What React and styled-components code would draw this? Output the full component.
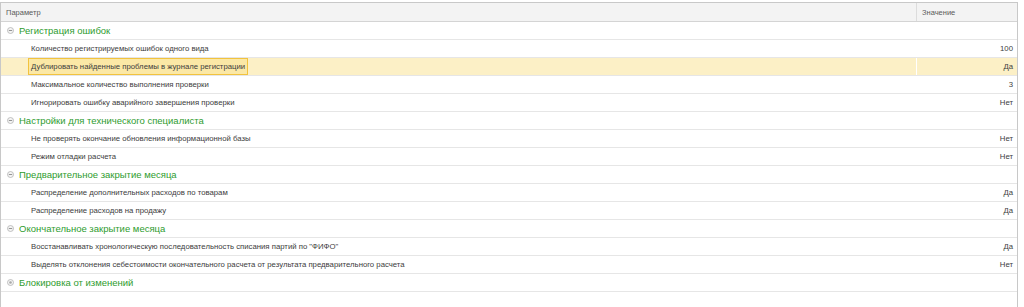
import React from "react";
import styled, { createGlobalStyle } from "styled-components";

const Global = createGlobalStyle`
  html, body { margin: 0; padding: 0; background: #fff; }
  body { font-family: Arial, "Liberation Sans", sans-serif; }
`;

const Page = styled.div`
  width: 1024px;
  height: 307px;
  background: #fff;
  padding-top: 2px;
  box-sizing: border-box;
`;

const Table = styled.div`
  width: 1018px;
  height: 305px;
  border-left: 1px solid #c8c8c8;
  border-right: 1px solid #c8c8c8;
  box-sizing: border-box;
  display: flex;
  flex-direction: column;
`;

const Header = styled.div`
  display: grid;
  grid-template-columns: 915px 1fr;
  height: 20px;
  border-top: 1px solid #c8c8c8;
  border-bottom: 1px solid #d4d4d4;
  background: #f3f3f3;
  box-sizing: border-box;
`;

const HeadCell = styled.div`
  display: flex;
  align-items: center;
  padding-left: ${(p) => p.$pad}px;
  font-size: 7.5px;
  color: #5a5a5a;
  border-left: ${(p) => (p.$divider ? "1px solid #dcdcdc" : "none")};
`;

const Row = styled.div`
  display: grid;
  grid-template-columns: 915px 1fr;
  height: 18px;
  box-sizing: border-box;
  border-bottom: 1px solid #e6e6e6;
  background: ${(p) => (p.$active ? "#fcf0c6" : "#fff")};
`;

const NameCell = styled.div`
  display: flex;
  align-items: center;
  padding-left: ${(p) => (p.$group ? 6 : 27)}px;
`;

const ItemText = styled.span`
  font-size: 7.75px;
  color: #3d3d3d;
  padding: 0 2px;
  height: 17px;
  display: flex;
  align-items: center;
  box-sizing: border-box;
  border: 1px solid ${(p) => (p.$active ? "#f2c33e" : "transparent")};
  background: ${(p) => (p.$active ? "#fbe8a6" : "transparent")};
`;

const GroupText = styled.span`
  font-size: 9.5px;
  color: #2e9c2e;
  margin-left: 5px;
`;

const ValueCell = styled.div`
  display: flex;
  align-items: center;
  justify-content: flex-end;
  padding-right: 4px;
  font-size: 7.75px;
  color: #3d3d3d;
  border-left: 1px solid ${(p) => (p.$active ? "#ffffff" : "transparent")};
`;

const Toggle = ({ open }) => (
  <svg width="7" height="7" viewBox="0 0 7 7">
    <circle cx="3.5" cy="3.5" r="3" fill="#f4f4f4" stroke="#b4b4b4" strokeWidth="0.8" />
    {open ? (
      <line x1="1.8" y1="3.5" x2="5.2" y2="3.5" stroke="#8a8a8a" strokeWidth="0.9" />
    ) : (
      <circle cx="3.5" cy="3.5" r="1.3" fill="#a8a8a8" />
    )}
  </svg>
);

const data = [
  {
    title: "Регистрация ошибок",
    open: true,
    items: [
      ["Количество регистрируемых ошибок одного вида", "100"],
      ["Дублировать найденные проблемы в журнале регистрации", "Да", true],
      ["Максимальное количество выполнения проверки", "3"],
      ["Игнорировать ошибку аварийного завершения проверки", "Нет"],
    ],
  },
  {
    title: "Настройки для технического специалиста",
    open: true,
    items: [
      ["Не проверять окончание обновления информационной базы", "Нет"],
      ["Режим отладки расчета", "Нет"],
    ],
  },
  {
    title: "Предварительное закрытие месяца",
    open: true,
    items: [
      ["Распределение дополнительных расходов по товарам", "Да"],
      ["Распределение расходов на продажу", "Да"],
    ],
  },
  {
    title: "Окончательное закрытие месяца",
    open: true,
    items: [
      ["Восстанавливать хронологическую последовательность списания партий по \"ФИФО\"", "Да"],
      ["Выделять отклонения себестоимости окончательного расчета от результата предварительного расчета", "Нет"],
    ],
  },
  { title: "Блокировка от изменений", open: false, items: [] },
];

export default function App() {
  return (
    <Page>
      <Global />
      <Table>
        <Header>
          <HeadCell $pad={5}>Параметр</HeadCell>
          <HeadCell $pad={5} $divider>Значение</HeadCell>
        </Header>
        {data.map((g) => (
          <React.Fragment key={g.title}>
            <Row>
              <NameCell $group>
                <Toggle open={g.open} />
                <GroupText>{g.title}</GroupText>
              </NameCell>
              <ValueCell />
            </Row>
            {g.items.map(([name, val, active]) => (
              <Row key={name} $active={active}>
                <NameCell>
                  <ItemText $active={active}>{name}</ItemText>
                </NameCell>
                <ValueCell $active={active}>{val}</ValueCell>
              </Row>
            ))}
          </React.Fragment>
        ))}
      </Table>
    </Page>
  );
}
